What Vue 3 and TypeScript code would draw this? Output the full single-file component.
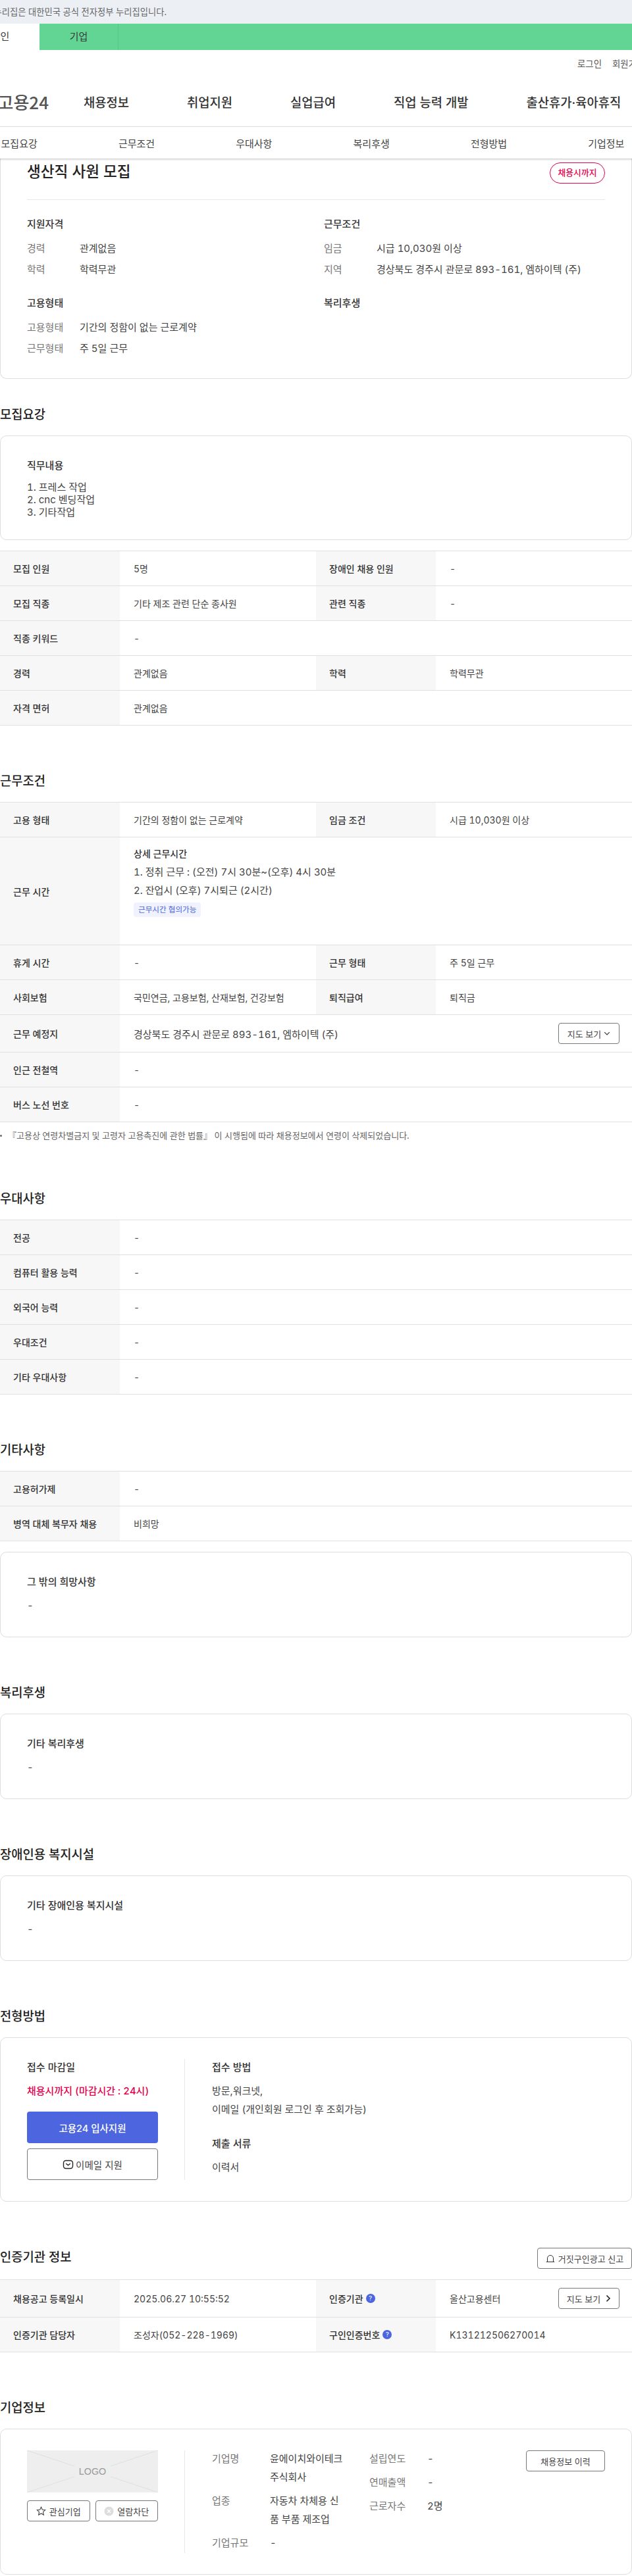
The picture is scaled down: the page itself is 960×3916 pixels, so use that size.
<script setup lang="ts">
type Row = { label: string; value: string; label2?: string; value2?: string }

const navItems = ['채용정보', '취업지원', '실업급여', '직업 능력 개발', '출산휴가·육아휴직']
const tabs = ['모집요강', '근무조건', '우대사항', '복리후생', '전형방법', '기업정보']

const recruitRows: Row[] = [
  { label: '모집 인원', value: '5명', label2: '장애인 채용 인원', value2: '-' },
  { label: '모집 직종', value: '기타 제조 관련 단순 종사원', label2: '관련 직종', value2: '-' },
  { label: '직종 키워드', value: '-' },
  { label: '경력', value: '관계없음', label2: '학력', value2: '학력무관' },
  { label: '자격 면허', value: '관계없음' },
]
const restRows: Row[] = [
  { label: '휴게 시간', value: '-', label2: '근무 형태', value2: '주 5일 근무' },
  { label: '사회보험', value: '국민연금, 고용보험, 산재보험, 건강보험', label2: '퇴직급여', value2: '퇴직금' },
]
const transitRows: Row[] = [
  { label: '인근 전철역', value: '-' },
  { label: '버스 노선 번호', value: '-' },
]
const preferRows: Row[] = [
  { label: '전공', value: '-' },
  { label: '컴퓨터 활용 능력', value: '-' },
  { label: '외국어 능력', value: '-' },
  { label: '우대조건', value: '-' },
  { label: '기타 우대사항', value: '-' },
]
const etcRows: Row[] = [
  { label: '고용허가제', value: '-' },
  { label: '병역 대체 복무자 채용', value: '비희망' },
]
</script>

<template>
  <div class="page">
    <div class="gov-bar">
      <div class="gov-text"><span>이 누리집은 대한민국 공식 전자정부 누리집입니다.</span></div>
    </div>
    <div class="site-tabs">
      <div class="site-tab active">개인</div>
      <div class="site-tab">기업</div>
    </div>

    <header class="header">
      <div class="util"><span>로그인</span><span>회원가입</span></div>
      <div class="main-nav">
        <div class="logo"><span>고용24</span></div>
        <nav class="nav-items">
          <span v-for="item in navItems" :key="item">{{ item }}</span>
        </nav>
      </div>
    </header>

    <div class="anchor-tabs">
      <span v-for="tab in tabs" :key="tab">{{ tab }}</span>
    </div>

    <section class="card summary">
      <div class="summary-head">
        <h1>생산직 사원 모집</h1>
        <span class="pill">채용시까지</span>
      </div>
      <div class="summary-grid">
        <div>
          <h3>지원자격</h3>
          <dl>
            <div><dt>경력</dt><dd>관계없음</dd></div>
            <div><dt>학력</dt><dd>학력무관</dd></div>
          </dl>
        </div>
        <div>
          <h3>근무조건</h3>
          <dl>
            <div><dt>임금</dt><dd>시급 10,030원 이상</dd></div>
            <div><dt>지역</dt><dd>경상북도 경주시 관문로 893-161, 엠하이텍 (주)</dd></div>
          </dl>
        </div>
        <div>
          <h3>고용형태</h3>
          <dl>
            <div><dt>고용형태</dt><dd>기간의 정함이 없는 근로계약</dd></div>
            <div><dt>근무형태</dt><dd>주 5일 근무</dd></div>
          </dl>
        </div>
        <div>
          <h3>복리후생</h3>
        </div>
      </div>
    </section>

    <section class="block">
      <h2>모집요강</h2>
      <div class="card text-card">
        <h4>직무내용</h4>
        <p class="duty">1. 프레스 작업<br />2. cnc 벤딩작업<br />3. 기타작업</p>
      </div>
      <div class="table with-gap">
        <div v-for="row in recruitRows" :key="row.label" class="row">
          <div class="th">{{ row.label }}</div>
          <div class="td" :class="{ wide: !row.label2 }">{{ row.value }}</div>
          <template v-if="row.label2">
            <div class="th">{{ row.label2 }}</div>
            <div class="td">{{ row.value2 }}</div>
          </template>
        </div>
      </div>
    </section>

    <section class="block">
      <h2>근무조건</h2>
      <div class="table">
        <div class="row">
          <div class="th">고용 형태</div>
          <div class="td">기간의 정함이 없는 근로계약</div>
          <div class="th">임금 조건</div>
          <div class="td">시급 10,030원 이상</div>
        </div>
        <div class="row">
          <div class="th">근무 시간</div>
          <div class="td wide hours">
            <strong>상세 근무시간</strong>
            <span>1. 정취 근무 : (오전) 7시 30분~(오후) 4시 30분</span>
            <span>2. 잔업시 (오후) 7시퇴근 (2시간)</span>
            <em class="badge">근무시간 협의가능</em>
          </div>
        </div>
        <div v-for="row in restRows" :key="row.label" class="row">
          <div class="th">{{ row.label }}</div>
          <div class="td">{{ row.value }}</div>
          <div class="th">{{ row.label2 }}</div>
          <div class="td">{{ row.value2 }}</div>
        </div>
        <div class="row tall">
          <div class="th">근무 예정지</div>
          <div class="td wide spread">
            <span class="addr">경상북도 경주시 관문로 893-161, 엠하이텍 (주)</span>
            <button class="btn map-btn" type="button">
              지도 보기
              <svg width="10" height="10" viewBox="0 0 10 10" fill="none" stroke="#333" stroke-width="1.1">
                <path d="M1.2 3.2 5 7l3.8-3.8" />
              </svg>
            </button>
          </div>
        </div>
        <div v-for="row in transitRows" :key="row.label" class="row">
          <div class="th">{{ row.label }}</div>
          <div class="td wide">{{ row.value }}</div>
        </div>
      </div>
      <p class="note">『고용상 연령차별금지 및 고령자 고용촉진에 관한 법률』 이 시행됨에 따라 채용정보에서 연령이 삭제되었습니다.</p>
    </section>

    <section class="block">
      <h2>우대사항</h2>
      <div class="table">
        <div v-for="row in preferRows" :key="row.label" class="row">
          <div class="th">{{ row.label }}</div>
          <div class="td wide">{{ row.value }}</div>
        </div>
      </div>
    </section>

    <section class="block">
      <h2>기타사항</h2>
      <div class="table">
        <div v-for="row in etcRows" :key="row.label" class="row">
          <div class="th">{{ row.label }}</div>
          <div class="td wide">{{ row.value }}</div>
        </div>
      </div>
      <div class="card text-card small with-gap">
        <h4>그 밖의 희망사항</h4>
        <p>-</p>
      </div>
    </section>

    <section class="block">
      <h2>복리후생</h2>
      <div class="card text-card small">
        <h4>기타 복리후생</h4>
        <p>-</p>
      </div>
    </section>

    <section class="block">
      <h2>장애인용 복지시설</h2>
      <div class="card text-card small">
        <h4>기타 장애인용 복지시설</h4>
        <p>-</p>
      </div>
    </section>

    <section class="block">
      <h2>전형방법</h2>
      <div class="card split">
        <div class="split-left">
          <h4>접수 마감일</h4>
          <p class="deadline">채용시까지 (마감시간 : 24시)</p>
          <button class="btn-apply primary" type="button">고용24 입사지원</button>
          <button class="btn-apply" type="button">
            <svg width="17" height="17" viewBox="0 0 17 17" fill="none" stroke="#222" stroke-width="1.4">
              <rect x="1.5" y="2.5" width="14" height="12" rx="3.5" />
              <path d="m5.2 7 3.3 2.6L11.8 7" />
            </svg>
            이메일 지원
          </button>
        </div>
        <div class="split-right">
          <h4>접수 방법</h4>
          <p class="method">방문,워크넷,<br />이메일 (개인회원 로그인 후 조회가능)</p>
          <h4 class="docs-title">제출 서류</h4>
          <p class="method docs">이력서</p>
        </div>
      </div>
    </section>

    <section class="block">
      <div class="head-row">
        <h2>인증기관 정보</h2>
        <button class="btn report-btn" type="button">
          <svg width="14" height="14" viewBox="0 0 14 14" fill="none" stroke="#333" stroke-width="1">
            <path d="M2.5 12.5V7a4.5 4.5 0 0 1 9 0v5.5M.8 12.5h12.4" />
          </svg>
          거짓구인광고 신고
        </button>
      </div>
      <div class="table">
        <div class="row tall">
          <div class="th">채용공고 등록일시</div>
          <div class="td">2025.06.27 10:55:52</div>
          <div class="th">인증기관 <i class="help">?</i></div>
          <div class="td spread">
            <span>울산고용센터</span>
            <button class="btn map-btn next" type="button">
              지도 보기
              <svg width="8" height="12" viewBox="0 0 8 12" fill="none" stroke="#222" stroke-width="1.6">
                <path d="m1.5 1.5 4.5 4.5-4.5 4.5" />
              </svg>
            </button>
          </div>
        </div>
        <div class="row">
          <div class="th">인증기관 담당자</div>
          <div class="td">조성자(052-228-1969)</div>
          <div class="th">구인인증번호 <i class="help">?</i></div>
          <div class="td">K131212506270014</div>
        </div>
      </div>
    </section>

    <section class="block">
      <h2>기업정보</h2>
      <div class="card company">
        <div class="company-left">
          <div class="logo-box">
            <svg class="logo-lines" viewBox="0 0 199 64" preserveAspectRatio="none" fill="none" stroke="#e0e0e0">
              <path d="M0 0 72 24M199 0l-72 24M0 64l72-24M199 64l-72-24" />
            </svg>
            <span>LOGO</span>
          </div>
          <div class="company-btns">
            <button class="btn" type="button">
              <svg width="15" height="15" viewBox="0 0 15 15" fill="none" stroke="#444" stroke-width="1.1">
                <path d="m7.5 1.2 1.9 4 4.3.5-3.2 3 .9 4.4-3.9-2.2-3.9 2.2.9-4.4-3.2-3 4.3-.5z" />
              </svg>
              관심기업
            </button>
            <button class="btn" type="button">
              <svg width="15" height="15" viewBox="0 0 15 15">
                <circle cx="7.5" cy="7.5" r="7" fill="#ddd" />
                <path d="m5 5 5 5m0-5-5 5" stroke="#fff" stroke-width="1.3" />
              </svg>
              열람차단
            </button>
          </div>
        </div>
        <div class="company-info">
          <div class="info-col first">
            <div class="info-row"><span>기업명</span><p>윤에이치와이테크 주식회사</p></div>
            <div class="info-row"><span>업종</span><p>자동차 차체용 신품 부품 제조업</p></div>
            <div class="info-row"><span>기업규모</span><p>-</p></div>
          </div>
          <div class="info-col second">
            <div class="info-row"><span>설립연도</span><p>-</p></div>
            <div class="info-row"><span>연매출액</span><p>-</p></div>
            <div class="info-row"><span>근로자수</span><p>2명</p></div>
          </div>
        </div>
        <button class="btn history-btn" type="button">채용정보 이력</button>
      </div>
    </section>
  </div>
</template>

<style scoped>
.page {
  width: 960px;
  overflow: hidden;
  color: #333;
  font-family: Inter, "Noto Sans CJK KR", sans-serif;
  font-size: 14px;
  font-variant-numeric: tabular-nums;
}

h1, h2, h3, h4, p, dl, dd {
  margin: 0;
}

.gov-bar {
  height: 36px;
  background: #ecf0f5;
}

.gov-text {
  display: flex;
  justify-content: flex-end;
  width: 253px;
  font-size: 13.3px;
  line-height: 36px;
  color: #666;
  white-space: nowrap;
}

.site-tabs {
  display: flex;
  height: 40px;
  background: #62d594;
}

.site-tab {
  width: 119px;
  line-height: 40px;
  text-align: center;
  font-size: 15px;
  color: #3a3a3a;
  border-right: 1px solid #55c786;
}

.site-tab.active {
  margin-left: -59px;
  background: #fff;
  border-right: 0;
}

.header {
  border-bottom: 1px solid #e8e8e8;
}

.util {
  display: flex;
  gap: 16px;
  height: 40px;
  padding-left: 877px;
  align-items: center;
  font-size: 13.4px;
  color: #555;
  white-space: nowrap;
}

.main-nav {
  display: flex;
  align-items: center;
  height: 76px;
}

.logo {
  display: flex;
  justify-content: flex-end;
  flex: none;
  width: 74px;
  margin-right: 53px;
  font-family: "Noto Sans CJK KR", sans-serif;
  font-size: 26px;
  font-weight: 500;
  color: #555;
  white-space: nowrap;
}

.nav-items {
  display: flex;
  gap: 88px;
  font-size: 18.75px;
  font-weight: 500;
  color: #333;
  white-space: nowrap;
}

.anchor-tabs {
  position: relative;
  z-index: 1;
  display: grid;
  grid-template-columns: repeat(6, 1fr);
  width: 1070px;
  height: 48px;
  margin-left: -60px;
  align-items: center;
  justify-items: center;
  background: #fff;
  font-size: 15px;
  color: #444;
  box-shadow: 0 1px 3px rgba(0, 0, 0, 0.25);
}

.card {
  border: 1px solid #ddd;
  border-radius: 10px;
  background: #fff;
}

.summary {
  border-top: 0;
  border-radius: 0 0 10px 10px;
  padding: 0 40px 29px;
}

.summary-head {
  display: flex;
  justify-content: space-between;
  padding: 6px 0 24px;
  border-bottom: 1px solid #e8e8e8;
}

h1 {
  font-size: 22.6px;
  font-weight: 500;
  line-height: 28px;
  color: #222;
}

.pill {
  box-sizing: border-box;
  width: 84px;
  height: 32px;
  line-height: 30px;
  border: 1px solid #e6004d;
  border-radius: 16px;
  text-align: center;
  font-size: 12.8px;
  font-weight: 500;
  color: #e6004d;
  white-space: nowrap;
}

.summary-grid {
  display: grid;
  grid-template-columns: 451px 1fr;
  row-gap: 23px;
  padding-top: 25px;
}

h3,
h4 {
  font-size: 15px;
  font-weight: 500;
  line-height: 24px;
  color: #333;
}

dl {
  margin-top: 9px;
}

dl > div {
  display: flex;
  line-height: 32px;
}

dt {
  width: 80px;
  font-size: 15px;
  color: #777;
}

dd {
  font-size: 15px;
  color: #444;
}

.block {
  margin-top: 70px;
}

.summary + .block {
  margin-top: 40px;
}

h2 {
  font-size: 18.75px;
  font-weight: 500;
  line-height: 30px;
  margin-bottom: 16px;
  color: #222;
}

.text-card {
  padding: 33px 40px 32px;
}

.duty {
  margin-top: 11px;
  line-height: 19px;
  font-size: 15px;
  color: #444;
}

.text-card.small {
  padding-bottom: 35px;
}

.text-card.small p {
  margin-top: 12px;
  line-height: 24px;
  font-size: 15px;
  color: #444;
}

.with-gap {
  margin-top: 16px;
}

.table {
  border-top: 1px solid #e0e0e0;
}

.row {
  display: grid;
  grid-template-columns: 182px 298px 182px 298px;
  border-bottom: 1px solid #e0e0e0;
}

.th {
  display: flex;
  align-items: center;
  gap: 4px;
  min-height: 52px;
  padding-left: 20px;
  background: #f7f7f7;
  font-size: 14px;
  font-weight: 500;
  color: #333;
}

.td {
  display: flex;
  align-items: center;
  padding: 0 20px 0 21px;
  color: #444;
}

.td.wide {
  grid-column: span 3;
}

.tall .th {
  min-height: 56px;
}

.spread {
  justify-content: space-between;
}

.addr {
  font-size: 15px;
}

.hours {
  flex-direction: column;
  align-items: flex-start;
  padding-top: 11px;
  padding-bottom: 42px;
  font-size: 15px;
  line-height: 28px;
}

.hours strong {
  font-size: 14px;
  font-weight: 500;
  color: #333;
}

.badge {
  margin-top: 4px;
  padding: 0 7px;
  line-height: 22px;
  font-size: 11.6px;
  font-style: normal;
  color: #4c66e0;
  background: #f0f2ff;
  border-radius: 4px;
}

.btn {
  display: inline-flex;
  align-items: center;
  justify-content: center;
  gap: 4px;
  height: 32px;
  padding: 0;
  border: 1px solid #777;
  border-radius: 4px;
  background: #fff;
  font-family: inherit;
  font-size: 13px;
  color: #444;
  white-space: nowrap;
}

.map-btn {
  flex: none;
  width: 93px;
  margin-right: -1px;
}

.note {
  position: relative;
  height: 22px;
  margin-top: 10px;
  padding-left: 12px;
  line-height: 20px;
  font-size: 13px;
  color: #666;
  white-space: nowrap;
}

.note::before {
  content: "";
  position: absolute;
  left: 0;
  top: 9px;
  width: 3px;
  height: 3px;
  border-radius: 50%;
  background: #666;
}

.split {
  display: flex;
  padding: 32px 40px;
}

.split-left {
  flex: none;
  box-sizing: border-box;
  width: 240px;
  height: 184px;
  padding-right: 40px;
  border-right: 1px solid #e8e8e8;
}

.split h4 {
  line-height: 26px;
}

.deadline {
  margin: 10px 0 18px;
  line-height: 26px;
  font-size: 15px;
  font-weight: 500;
  color: #e6004d;
  white-space: nowrap;
}

.btn-apply {
  display: flex;
  align-items: center;
  justify-content: center;
  gap: 3px;
  width: 199px;
  height: 48px;
  padding: 0;
  border: 1px solid #777;
  border-radius: 4px;
  background: #fff;
  font-family: inherit;
  font-size: 14.5px;
  color: #444;
}

.btn-apply.primary {
  margin-bottom: 8px;
  border: 0;
  background: #4d66e0;
  font-weight: 500;
  color: #fff;
}

.split-right {
  padding-left: 41px;
}

.method {
  margin-top: 9px;
  line-height: 28px;
  font-size: 15px;
  color: #444;
}

.split h4.docs-title {
  margin-top: 25px;
}

.head-row {
  display: flex;
  justify-content: space-between;
  margin-bottom: 16px;
}

.head-row h2 {
  margin: 0;
}

.report-btn {
  width: 144px;
  gap: 5px;
}

.help {
  display: inline-block;
  width: 14px;
  height: 14px;
  border-radius: 50%;
  background: #4d66e0;
  font-size: 9px;
  font-style: normal;
  line-height: 14px;
  text-align: center;
  color: #fff;
}

.next {
  gap: 8px;
}

.company {
  position: relative;
  display: flex;
  box-sizing: border-box;
  height: 222px;
  padding: 32px 40px;
}

.company-left {
  flex: none;
  box-sizing: border-box;
  width: 240px;
  height: 156px;
  padding-right: 40px;
  border-right: 1px solid #e8e8e8;
}

.logo-box {
  position: relative;
  display: flex;
  align-items: center;
  justify-content: center;
  height: 64px;
  background: #eee;
  font-family: "Liberation Sans", sans-serif;
  font-size: 14.3px;
  color: #999;
}

.logo-lines {
  position: absolute;
  inset: 0;
  width: 100%;
  height: 100%;
}

.company-btns {
  display: flex;
  gap: 8px;
  margin-top: 12px;
}

.company-btns .btn {
  flex: 1;
  gap: 5px;
}

.company-info {
  display: flex;
  padding-left: 41px;
  margin-top: -1px;
  font-size: 15px;
  line-height: 28px;
}

.info-col {
  display: flex;
  flex-direction: column;
  gap: 8px;
}

.info-col.first {
  width: 239px;
}

.info-row {
  display: flex;
}

.info-row span {
  flex: none;
  width: 88px;
  color: #777;
}

.info-row p {
  width: 115px;
  word-break: break-all;
  color: #444;
}

.history-btn {
  position: absolute;
  right: 40px;
  width: 120px;
}
</style>

<style>
html,
body {
  overflow-x: hidden;
}
</style>
